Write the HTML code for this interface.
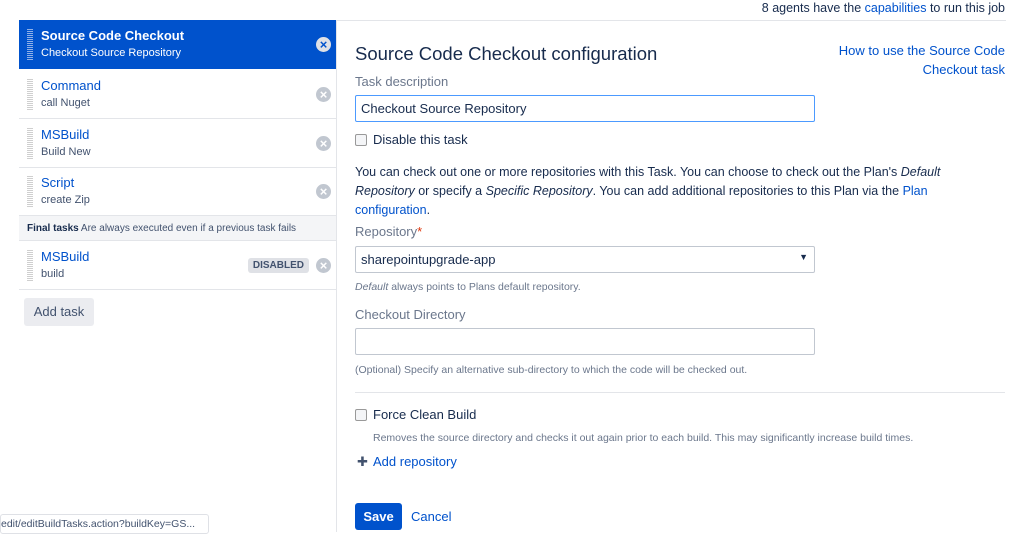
<!DOCTYPE html>
<html><head><style>
*{box-sizing:border-box;margin:0;padding:0}
body{width:1024px;height:532px;overflow:hidden;background:#fff;font-family:"Liberation Sans",sans-serif;color:#172b4d;position:relative;font-size:13px}
.a{position:absolute}
a,.lnk{color:#0052cc;text-decoration:none}
.item{position:absolute;left:19px;width:317px;height:49px;border-bottom:1px solid #e3e5e9}
.item .grip{position:absolute;left:8px;top:9px;width:6px;height:31px;background:repeating-linear-gradient(0deg,#bbb 0 1px,transparent 1px 2px),#fff;opacity:.7}
.item .t{position:absolute;left:22px;top:8px;font-size:13px;color:#0052cc}
.item .s{position:absolute;left:22px;top:27px;font-size:11px;color:#42526e}
.x{position:absolute;right:5px;top:17px;width:15px;height:15px;border-radius:50%;background:#c1c7d0;color:#fff;font-size:13px;font-weight:bold;text-align:center;line-height:15px}
.lbl{color:#6b778c;font-size:13px}
.inp{position:absolute;left:355px;width:460px;height:27px;border:1px solid #c1c7d0;border-radius:2px;font-size:13px;padding:5px 5px}
.cb{position:absolute;width:12px;height:12px;border:1px solid #999;border-radius:2px;background:#f4f5f7}
.help{color:#6b778c;font-size:10.5px}
</style></head><body>
<div class="a" style="right:19px;top:1px;font-size:12.5px;color:#172b4d">8 agents have the <span class="lnk">capabilities</span> to run this job</div>
<div class="a" style="left:336px;top:20px;width:670px;height:1px;background:#e3e5e9"></div>
<div class="a" style="left:336px;top:20px;width:1px;height:512px;background:#e3e5e9"></div>

<div class="item" style="top:20px;background:#0052cc;border-bottom:none">
<div class="grip" style="background:repeating-linear-gradient(0deg,#8fb0e8 0 1px,transparent 1px 2px);opacity:1"></div>
<div class="t" style="color:#fff;font-weight:bold">Source Code Checkout</div>
<div class="s" style="color:#fff">Checkout Source Repository</div>
<div class="x" style="background:#dfe1e6;color:#0052cc">×</div></div>
<div class="item" style="top:70px"><div class="grip"></div><div class="t">Command</div><div class="s">call Nuget</div><div class="x">×</div></div>
<div class="item" style="top:119px"><div class="grip"></div><div class="t">MSBuild</div><div class="s">Build New</div><div class="x">×</div></div>
<div class="item" style="top:167px"><div class="grip"></div><div class="t">Script</div><div class="s">create Zip</div><div class="x">×</div></div>
<div class="a" style="left:19px;top:216px;width:317px;height:25px;background:#f4f5f7;border-bottom:1px solid #e3e5e9;font-size:10px;color:#42526e;padding:7px 8px"><b style="color:#172b4d">Final tasks</b> Are always executed even if a previous task fails</div>
<div class="item" style="top:241px"><div class="grip"></div><div class="t">MSBuild</div><div class="s">build</div>
<div class="a" style="right:27px;top:17px;background:#dfe1e6;border-radius:3px;font-size:10px;font-weight:bold;color:#42526e;padding:2px 5px">DISABLED</div><div class="x">×</div></div>
<div class="a" style="left:24px;top:298px;width:70px;height:28px;background:#ebecf0;border-radius:3px;font-size:13px;color:#42526e;text-align:center;line-height:28px">Add task</div>

<div class="a" style="left:0;top:514px;width:209px;height:20px;border:1px solid #dfe1e6;border-radius:3px;background:#fff;font-size:10.5px;color:#42526e;padding:3px 0 0 0;white-space:nowrap;overflow:hidden">edit/editBuildTasks.action?buildKey=GS...</div>

<div class="a" style="left:355px;top:43px;font-size:18.5px;color:#172b4d">Source Code Checkout configuration</div>
<div class="a lnk" style="right:19px;top:41px;font-size:13px;text-align:right;line-height:19px">How to use the Source Code<br>Checkout task</div>
<div class="a lbl" style="left:355px;top:74px">Task description</div>
<div class="inp" style="top:95px;border-color:#4c9aff">Checkout Source Repository</div>
<div class="cb" style="left:355px;top:134px"></div>
<div class="a" style="left:373px;top:132px">Disable this task</div>
<div class="a" style="left:355px;top:163px;width:620px;line-height:19px;font-size:12.5px">You can check out one or more repositories with this Task. You can choose to check out the Plan's <i>Default Repository</i> or specify a <i>Specific Repository</i>. You can add additional repositories to this Plan via the <span class="lnk">Plan configuration</span>.</div>
<div class="a lbl" style="left:355px;top:224px">Repository<span style="color:#de350b">*</span></div>
<div class="inp" style="top:246px">sharepointupgrade-app<span style="position:absolute;right:6px;top:5px;font-size:9px">▼</span></div>
<div class="a help" style="left:355px;top:281px"><i>Default</i> always points to Plans default repository.</div>
<div class="a lbl" style="left:355px;top:307px">Checkout Directory</div>
<div class="inp" style="top:328px"></div>
<div class="a help" style="left:355px;top:364px">(Optional) Specify an alternative sub-directory to which the code will be checked out.</div>
<div class="a" style="left:355px;top:392px;width:650px;height:1px;background:#e3e5e9"></div>
<div class="cb" style="left:355px;top:409px"></div>
<div class="a" style="left:373px;top:407px">Force Clean Build</div>
<div class="a help" style="left:373px;top:432px">Removes the source directory and checks it out again prior to each build. This may significantly increase build times.</div>
<div class="a" style="left:357px;top:454px;font-size:13px;color:#42526e">✚</div>
<div class="a lnk" style="left:373px;top:454px">Add repository</div>
<div class="a" style="left:355px;top:503px;width:47px;height:27px;background:#0052cc;border-radius:3px;color:#fff;font-weight:bold;text-align:center;line-height:27px">Save</div>
<div class="a lnk" style="left:411px;top:509px">Cancel</div>
</body></html>
